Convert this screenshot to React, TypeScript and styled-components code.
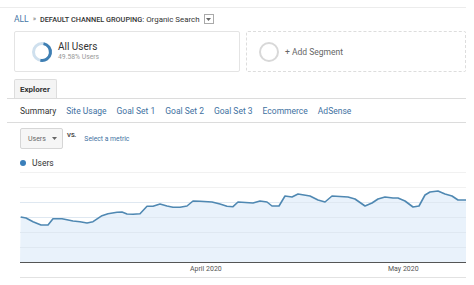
import styled, { createGlobalStyle } from 'styled-components';

const GlobalStyle = createGlobalStyle`
  html, body {
    margin: 0;
    padding: 0;
    background: #fff;
    font-family: Roboto, "Liberation Sans", sans-serif;
    color: #333;
  }
`;

const points: [number, number][] = [
  [20.7, 216], [26, 217], [33, 220.7], [41, 224], [48, 224], [53, 217.7], [62, 217.7],
  [67, 218.7], [73, 220], [80, 220.7], [87, 222], [93, 220.7], [102, 214.7], [108, 212.7],
  [117, 211.3], [122, 211], [127, 213], [133, 213.3], [140, 212.7], [147, 205.3], [153, 205.3],
  [160, 203], [167, 205], [173, 206.3], [180, 206.3], [187, 205], [193, 200], [200, 200.3],
  [212, 201], [220, 203], [227, 205.3], [233, 205.7], [238, 201], [253, 202], [260, 200],
  [267, 201], [272, 205], [279, 205], [285, 195], [292, 196], [298, 193], [310, 195],
  [318, 199], [325, 201], [332, 195], [348, 196], [355, 198], [365, 205], [372, 202],
  [378, 198], [385, 196], [393, 197], [398, 197], [405, 200], [413, 206], [419, 205],
  [425, 194], [430, 191], [438, 190], [445, 193], [452, 195], [458, 199], [466, 199],
];

const tabs = ['Summary', 'Site Usage', 'Goal Set 1', 'Goal Set 2', 'Goal Set 3', 'Ecommerce', 'AdSense'];

export default function App() {
  const W = 446;
  const H = 91;
  const rel = points.map(([x, y]) => [x - 20, y - 171]);
  const line = rel.map(([x, y], i) => `${i ? 'L' : 'M'}${x.toFixed(1)},${y.toFixed(1)}`).join(' ');
  const area = `${line} L${W},${H} L0,${H} Z`;

  return (
    <>
      <GlobalStyle />
      <SPage>
        <STopBar />
        <SBreadcrumb>
          <SCrumbLink>ALL</SCrumbLink>
          <SCrumbSep>»</SCrumbSep>
          <SCrumbDim>DEFAULT CHANNEL GROUPING:</SCrumbDim>
          <SCrumbValue>Organic Search</SCrumbValue>
          <SCrumbDrop>
            <svg width="5" height="3" viewBox="0 0 5 3"><path d="M0 0h5L2.5 3z" fill="#666" /></svg>
          </SCrumbDrop>
        </SBreadcrumb>

        <SSegments>
          <SSegment>
            <svg width="22" height="22" viewBox="0 0 22 22">
              <circle cx="11" cy="11" r="8.5" fill="none" stroke="#cfe0ee" strokeWidth="3" />
              <circle
                cx="11" cy="11" r="8.5" fill="none" stroke="#3f7fb3" strokeWidth="3"
                strokeDasharray={`${2 * Math.PI * 8.5 * 0.5} 100`}
                transform="rotate(-80 11 11)"
              />
            </svg>
            <div>
              <SSegTitle>All Users</SSegTitle>
              <SSegSub>49.58% Users</SSegSub>
            </div>
          </SSegment>
          <SSegment $dashed>
            <svg width="22" height="22" viewBox="0 0 22 22">
              <circle cx="11" cy="11" r="9" fill="none" stroke="#d8d8d8" strokeWidth="2" />
            </svg>
            <SAddText>+ Add Segment</SAddText>
          </SSegment>
        </SSegments>

        <STabBar>
          <STab>Explorer</STab>
        </STabBar>

        <SSubTabs>
          {tabs.map((t, i) => (
            <SSubTab key={t} $active={i === 0}>{t}</SSubTab>
          ))}
        </SSubTabs>

        <SControls>
          <SMetricSelect>
            Users
            <svg width="5" height="3" viewBox="0 0 5 3"><path d="M0 0h5L2.5 3z" fill="#666" /></svg>
          </SMetricSelect>
          <SVs>VS.</SVs>
          <SSelectLink>Select a metric</SSelectLink>
        </SControls>

        <SLegend>
          <SDot />
          Users
        </SLegend>

        <SChart>
          <svg width={W} height={H} viewBox={`0 0 ${W} ${H}`} style={{ display: 'block' }}>
            {[0, 15].map((y) => (
              <line key={y} x1="0" x2={W} y1={y + 0.5} y2={y + 0.5} stroke="#f1f1f1" strokeWidth="1" />
            ))}
            <path d={area} fill="#e9f2fb" />
            {[30, 45, 60, 75].map((y) => (
              <line key={'g' + y} x1="0" x2={W} y1={y + 0.5} y2={y + 0.5} stroke="#dfe8f1" strokeWidth="1" />
            ))}
            <path d={line} fill="none" stroke="#4f88b2" strokeWidth="1.6" strokeLinejoin="round" />
            <line x1="0" x2={W} y1={H - 0.5} y2={H - 0.5} stroke="#555" strokeWidth="1" />
          </svg>
          <SAxis>
            <SAxisLabel style={{ left: 170 }}>April 2020</SAxisLabel>
            <SAxisLabel style={{ left: 368 }}>May 2020</SAxisLabel>
          </SAxis>
        </SChart>
      </SPage>
    </>
  );
}

const SPage = styled.div`
  width: 466px;
  height: 285px;
  overflow: hidden;
`;

const STopBar = styled.div`
  height: 7px;
  border-bottom: 1px solid #ececec;
`;

const SBreadcrumb = styled.div`
  display: flex;
  align-items: center;
  height: 22px;
  margin-left: 14px;
`;

const SCrumbLink = styled.span`
  font-size: 8.5px;
  color: #4677a6;
`;

const SCrumbSep = styled.span`
  font-size: 7px;
  color: #777;
  margin: 0 4px;
`;

const SCrumbDim = styled.span`
  font-size: 7.3px;
  font-weight: 500;
  color: #333;
  margin-right: 2px;
`;

const SCrumbValue = styled.span`
  font-size: 7.9px;
  color: #333;
`;

const SCrumbDrop = styled.span`
  display: inline-flex;
  align-items: center;
  justify-content: center;
  width: 8px;
  height: 8px;
  border: 1px solid #aaa;
  margin-left: 4px;
`;

const SSegments = styled.div`
  display: grid;
  grid-template-columns: 226px 220px;
  gap: 6px;
  margin-left: 14px;
  margin-top: 1px;
`;

const SSegment = styled.div<{ $dashed?: boolean }>`
  box-sizing: border-box;
  height: 41px;
  border: 1px ${(p) => (p.$dashed ? 'dashed #ddd' : 'solid #e4e4e4')};
  border-radius: 2px;
  display: flex;
  align-items: center;
  gap: 5px;
  padding-left: ${(p) => (p.$dashed ? '11px' : '16px')};
  svg { flex: none; }
`;

const SSegTitle = styled.div`
  font-size: 10px;
  color: #333;
  line-height: 12px;
`;

const SSegSub = styled.div`
  font-size: 6.8px;
  color: #999;
  line-height: 9px;
`;

const SAddText = styled.span`
  font-size: 8.5px;
  color: #666;
`;

const STabBar = styled.div`
  margin-top: 7px;
  margin-left: 7px;
  padding-left: 7px;
  border-bottom: 1px solid #dcdcdc;
  display: flex;
`;

const STab = styled.div`
  box-sizing: border-box;
  height: 19px;
  width: 43px;
  padding: 0 0 0 5px;
  display: flex;
  align-items: center;
  font-size: 8px;
  font-weight: 700;
  color: #333;
  background: #f4f4f4;
  border: 1px solid #ddd;
  border-bottom: none;
  border-radius: 2px 2px 0 0;
`;

const SSubTabs = styled.div`
  margin-left: 7px;
  padding-left: 13px;
  height: 23px;
  display: flex;
  align-items: center;
  gap: 10px;
  border-bottom: 1px solid #dcdcdc;
`;

const SSubTab = styled.span<{ $active?: boolean }>`
  font-size: 8.5px;
  color: ${(p) => (p.$active ? '#333' : '#41719f')};
`;

const SControls = styled.div`
  display: flex;
  align-items: center;
  margin-left: 20px;
  margin-top: 5px;
  height: 21px;
`;

const SMetricSelect = styled.div`
  box-sizing: border-box;
  width: 43px;
  height: 21px;
  display: flex;
  align-items: center;
  gap: 6px;
  padding-left: 7px;
  font-size: 7px;
  color: #666;
  background: #f6f6f6;
  border: 1px solid #d6d6d6;
  border-radius: 2px;
`;

const SVs = styled.span`
  font-size: 6px;
  font-weight: 700;
  color: #444;
  margin-left: 4px;
  align-self: flex-start;
  margin-top: 3px;
`;

const SSelectLink = styled.span`
  font-size: 6.8px;
  color: #41719f;
  margin-left: 8px;
`;

const SLegend = styled.div`
  display: flex;
  align-items: center;
  gap: 6px;
  margin-left: 20px;
  margin-top: 8px;
  font-size: 8.5px;
  color: #333;
  height: 12px;
`;

const SDot = styled.span`
  width: 6px;
  height: 6px;
  border-radius: 50%;
  background: #3a7fba;
`;

const SChart = styled.div`
  margin-left: 20px;
  margin-top: 3px;
  width: 446px;
`;

const SAxis = styled.div`
  position: relative;
  height: 14px;
  border-bottom: 1px solid #e2e2e2;
`;

const SAxisLabel = styled.span`
  position: absolute;
  top: 2px;
  font-size: 7px;
  color: #555;
`;
